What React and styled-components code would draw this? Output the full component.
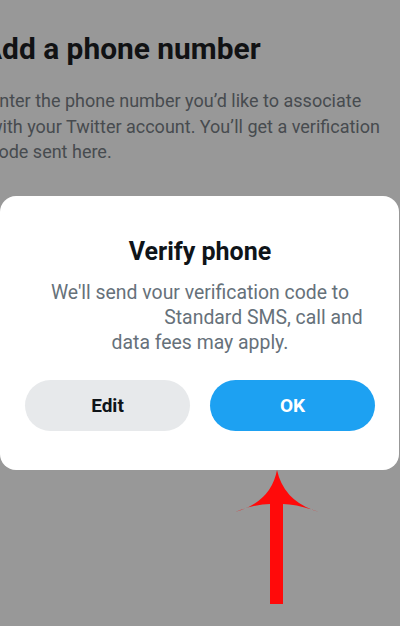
import React from 'react'
import styled, { createGlobalStyle } from 'styled-components'

const GlobalStyle = createGlobalStyle`
  html, body {
    margin: 0;
    padding: 0;
    background: #989898;
  }

  body {
    font-family: Roboto, 'Noto Sans', 'Liberation Sans', sans-serif;
  }
`

const App = () => {
  return (
    <Page>
      <GlobalStyle />
      <Content>
        <Heading>Add a phone number</Heading>
        <Intro>
          Enter the phone number you’d like to associate
          <br />
          with your Twitter account. You’ll get a verification
          <br />
          code sent here.
        </Intro>
      </Content>

      <Overlay>
        <Dialog role="dialog" aria-labelledby="verify-title">
          <Title id="verify-title">Verify phone</Title>
          <Body>
            We'll send vour verification code to
            <br />
            <Redacted />Standard SMS, call and
            <br />
            data fees may apply.
          </Body>
          <Actions>
            <ActionButton>Edit</ActionButton>
            <ActionButton primary>OK</ActionButton>
          </Actions>
        </Dialog>
      </Overlay>

      <Arrow viewBox="0 0 95 142" aria-hidden="true">
        <path
          d="M47 4 Q41 36 5 46 Q26 38 40 38 L40 138 L53 138 L53 38 Q67 38 89 46 Q54 36 47 4 Z"
          fill="#ff0a0a"
        />
      </Arrow>
    </Page>
  )
}

export default App

const Page = styled.main`
  position: relative;
  width: 400px;
  height: 626px;
  overflow: hidden;
  background: #989898;
`

const Content = styled.section`
  display: flex;
  flex-direction: column;
  gap: 22px;
  padding-top: 32px;
  margin-left: -8px;
`

const Heading = styled.h1`
  margin: 0 0 0 -10px;
  font-size: 29.9px;
  line-height: 34px;
  font-weight: 700;
  color: #111214;
`

const Intro = styled.p`
  margin: 0;
  margin-left: -3px;
  font-size: 18px;
  line-height: 25.5px;
  color: #474b4f;
  white-space: nowrap;
`

const Overlay = styled.div`
  position: absolute;
  inset: 0;
  padding-top: 196px;
`

const Dialog = styled.div`
  display: flex;
  flex-direction: column;
  align-items: center;

  width: 399px;
  box-sizing: border-box;
  padding: 41px 24px 39px 25px;
  background: #ffffff;
  border-radius: 16px;
`

const Title = styled.h2`
  margin: 0;
  font-size: 25px;
  line-height: 30px;
  font-weight: 700;
  color: #0f1419;
`

const Body = styled.p`
  margin: 13px 0 0;
  font-size: 19.4px;
  line-height: 25px;
  color: #66717a;
  text-align: center;
  white-space: nowrap;
`

const Redacted = styled.span`
  display: inline-block;
  width: 127px;
`

const Actions = styled.div`
  display: grid;
  grid-template-columns: 1fr 1fr;
  gap: 20px;
  width: 100%;
  margin-top: 25px;
`

const ActionButton = styled.button`
  height: 51px;
  border: none;
  border-radius: 26px;
  background: ${({ primary }) => (primary ? '#1da1f2' : '#e7e9eb')};
  color: ${({ primary }) => (primary ? '#ffffff' : '#0f1419')};
  font-family: inherit;
  font-size: 19px;
  font-weight: 700;
  cursor: pointer;
`

const Arrow = styled.svg`
  position: absolute;
  left: 230px;
  top: 466px;
  width: 95px;
  height: 142px;
`
